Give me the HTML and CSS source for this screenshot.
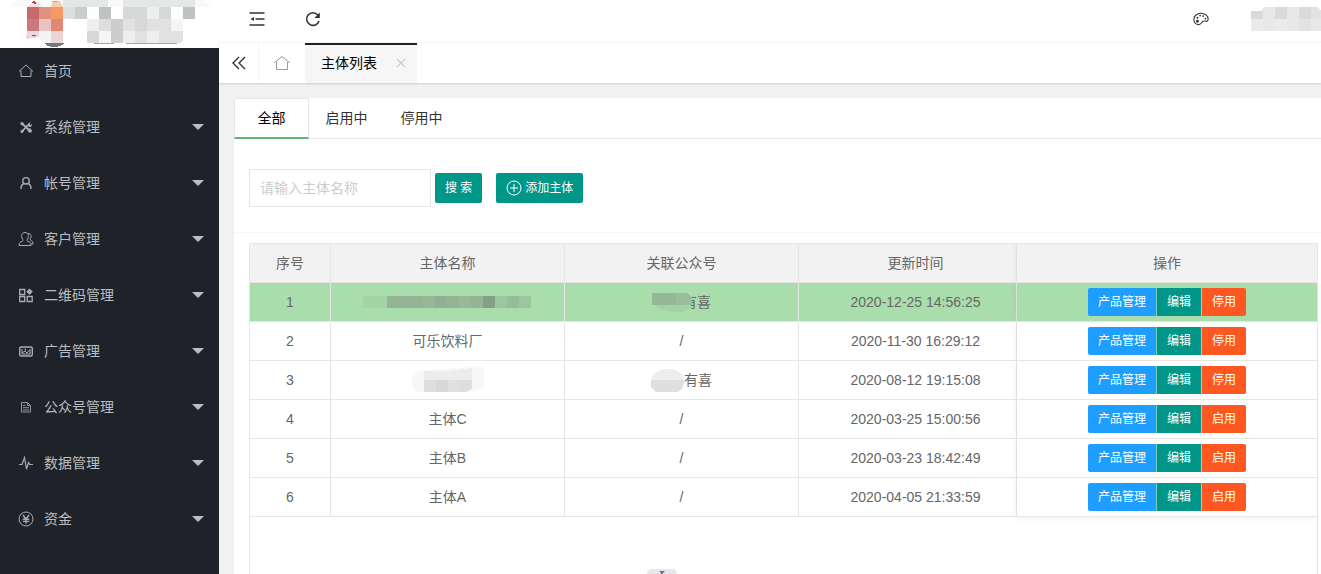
FILE: index.html
```
<!DOCTYPE html>
<html lang="zh-CN">
<head>
<meta charset="utf-8">
<title>主体列表</title>
<link rel="stylesheet" href="styles.css">
</head>
<body>
<div class="app">
  <aside class="side">
    <div class="logo">
      <svg width="219" height="48" viewBox="0 0 219 48" shape-rendering="crispEdges" aria-hidden="true">
        <path fill="#f8f9f9" d="M10 7 16 0H204l7 7z"/>
        <path fill="#e4e7e7" d="M63 0h45v7H63zM123 0h72v7h-72z"/>
        <path fill="#efe3e3" d="M27 7l5-5h6l4 5z"/><path fill="#c4423f" d="M31 2l3-1 3 2-2 1z"/><path fill="#f3cdb4" d="M51 7l2-6h7l3 6z"/><path fill="#eaa07a" d="M52 1h6v1h-6z"/>
        <path fill="#c9686d" d="M27 7h12v12H27z"/><path fill="#e1927f" d="M39 7h12v12H39z"/><path fill="#f49a62" d="M51 7h12v12H51z"/>
        <path fill="#c97a80" d="M27 19h12v12H27z"/><path fill="#e9c4c1" d="M39 19h12v12H39z"/><path fill="#e28777" d="M51 19h12v12H51z"/>
        <path fill="#f0d6d9" d="M27 31h12v6l-13 2z"/><path fill="#bd3a48" d="M32 35h4v1h-4z"/><path fill="#f5f4f5" d="M39 31h12v12h-7l-5-4z"/><path fill="#edd5d6" d="M51 31h12v12H51z"/>
        <path fill="#727a7c" d="M44 43h21q-4 4-11 4t-10-4z"/>
        <path fill="#dedede" d="M63 7h12v12H63zM99 19h12v12H99zM135 19h12v12h-12z"/>
        <path fill="#cdcdcd" d="M75 7h12v12H75zM111 19h12v12h-12zM111 31h12v12h-12z"/>
        <path fill="#c1c1c1" d="M99 7h12v12H99zM183 7h12v12h-12z"/>
        <path fill="#d8d8d8" d="M123 7h12v12h-12zM159 7h12v12h-12zM135 19h12v12h-12zM87 31h12v12H87zM135 7h12v12h-12z"/>
        <path fill="#eeeeee" d="M147 7h12v12h-12zM87 19h12v12H87zM123 31h12v12h-12zM147 31h12v12h-12z"/>
        <path fill="#e1e1e1" d="M123 19h12v12h-12zM147 19h24v12h-24zM135 31h12v12h-12zM159 31h24v10l-3 2h-21z"/>
        <path fill="#f5f5f5" d="M99 31h12v12H99zM171 19h12v12h-12z"/>
        <path fill="#a4a7a6" d="M94 43h20v1H94zM126 43h51v1h-51z"/>
      </svg>
    </div>
    <nav class="menu">
      <a class="item" href="#"><svg class="ico" viewBox="0 0 16 16"><path d="M1 8.500 8 2l7 6.500M3 7.500v6h10v-6"/></svg><span>首页</span></a>
      <a class="item" href="#"><svg class="ico" viewBox="0 0 16 16"><path stroke-width="1.800" d="M4 4.500l7.500 7M4 12.500l6-6.500"/><path fill="currentColor" stroke="none" d="M2.500 3.500 4.500 3l1.500 1.500-1.500 2-2-.8zM10 4.500 12.500 3l-1 2 1.200 1 1.300-1c.3 1.500-.5 3-2.500 3L9.500 7zM10 10l2-1 2 2.500-.5 2h-2.500L9.500 12zM2.500 11.500 5 10.500l1 1.500-1.500 2h-1.500z"/></svg><span>系统管理</span><i class="caret"></i></a>
      <a class="item" href="#"><svg class="ico" viewBox="0 0 16 16"><g stroke-width="1.400"><circle cx="8" cy="5.800" r="3.200"/><path d="M3 14c0-3 1.400-5 3.200-5.500M13 14c0-3-1.400-5-3.200-5.500"/></g></svg><span>帐号管理</span><i class="caret"></i></a>
      <a class="item" href="#"><svg class="ico" viewBox="0 0 16 16"><path d="M1 14.500c0-3 1.500-3.500 3.500-4.500.8-.5.500-1 0-2C2.500 4.500 4 1.500 7 1.500s4.500 3 2.500 6.500c-.5 1-.8 1.500 0 2 2 1 3.500 1.500 3.500 4.500zM10 2.500c3 .2 4 2.500 2.500 5-.5 1-.5 1.300 0 1.700 2 1 2.500 1.800 2.500 3.800h-2"/></svg><span>客户管理</span><i class="caret"></i></a>
      <a class="item" href="#"><svg class="ico" viewBox="0 0 16 16"><path stroke-width="1.300" d="M1.700 2.500h5v5h-5zM1.700 9.500h5v5h-5zM9.200 9.500h5v5h-5z"/><path fill="currentColor" d="M11.500 2l2.700 2.700-2.700 2.700-2.700-2.700z"/></svg><span>二维码管理</span><i class="caret"></i></a>
      <a class="item" href="#"><svg class="ico" viewBox="0 0 16 16"><rect x="1.700" y="4" width="12.600" height="9" rx="1.500" stroke-width="1.400"/><path d="M3.500 11h9M4 10.500V6M4 10l3-2 2 2 3-3.500V11M6.500 6h1v1.500"/></svg><span>广告管理</span><i class="caret"></i></a>
      <a class="item" href="#"><svg class="ico dim" viewBox="0 0 16 16"><path d="M3.500 3.500h6l3 3v6.500h-9zM9.500 3.500v3h3M5 6.500h2.500M5 8.700h6M5 11h6"/></svg><span>公众号管理</span><i class="caret"></i></a>
      <a class="item" href="#"><svg class="ico" viewBox="0 0 16 16"><path stroke-width="1.200" d="M1 9.500h3L6.500 2.500 8.500 14l2-6.500 1.200 2H15"/></svg><span>数据管理</span><i class="caret"></i></a>
      <a class="item" href="#"><svg class="ico" viewBox="0 0 16 16"><circle cx="8" cy="8" r="7"/><path stroke-width="1.400" d="M5 4l3 4 3-4M8 8v4.500M4.800 8.200h6.400M4.800 10.400h6.400"/></svg><span>资金</span><i class="caret"></i></a>
    </nav>
  </aside>

  <div class="main">
    <header class="topbar">
      <button class="tool" type="button" aria-label="收起菜单"><svg width="16" height="16" viewBox="0 0 16 16"><path stroke-width="1.500" d="M.5 2h15M6.500 8h9M.5 14h15"/><path fill="currentColor" stroke="none" d="M1.500 8l3.500-2v4z"/></svg></button>
      <button class="tool" type="button" aria-label="刷新"><svg width="16" height="16" viewBox="0 0 16 16"><path stroke-width="1.600" d="M12.800 4A6.300 6.300 0 1 0 14 10"/><path fill="currentColor" stroke="none" d="M14.800 1.500V7H9.300z"/></svg></button>
      <span class="spacer"></span>
      <button class="tool theme" type="button" aria-label="主题"><svg width="16" height="16" viewBox="0 0 18 16"><path stroke-width="1.200" d="M9 1.500c4.500 0 8 3 8 6.500 0 2-1 3-2.500 2.600-2-.6-3.300-.3-4.300 1C9.200 13 8 14.300 6 14.300 3 14.300 1 11.500 1 8.500c0-4 3.500-7 8-7z"/><g fill="currentColor" stroke="none"><circle cx="5" cy="10.500" r="1.600"/><circle cx="5" cy="6.500" r="1.100"/><circle cx="8" cy="4.200" r="1"/><circle cx="11.500" cy="4.700" r="1"/><circle cx="14" cy="7.500" r="1"/></g></svg></button>
      <svg class="user" width="71" height="24" viewBox="0 0 71 24" shape-rendering="crispEdges" aria-hidden="true"><path fill="#e8e8e8" d="M1 4h9l5-4h51l5 4v20H1z"/><path fill="#dadada" d="M1 4h12v8H1zM25 0h12v12H25zM49 0h12v12H49z"/><path fill="#ebebeb" d="M1 12h12v12H1zM25 12h12v12H25z"/><path fill="#e2e2e2" d="M61 0h6l4 4v8H61zM49 12h12v12H49z"/></svg>
    </header>
    <div class="pagetabs">
      <button class="prev" type="button" aria-label="向左"><svg width="14" height="16" viewBox="0 0 14 16"><path stroke-width="1.400" d="M7 2 1 8l6 6M13 2 7 8l6 6"/></svg></button>
      <a class="home" href="#" aria-label="首页"><svg width="18" height="16" viewBox="0 0 18 16"><path d="M1 8 9 1.500 17 8M3.500 7v7.500h11V7"/></svg></a>
      <div class="current"><span>主体列表</span><button class="close" type="button" aria-label="关闭"><svg width="10" height="10" viewBox="0 0 10 10"><path stroke-width="1.200" d="M1 1l8 8M9 1l-8 8"/></svg></button></div>
    </div>

    <main class="card">
      <div class="tabs" role="tablist">
        <button class="tab on" type="button" role="tab" aria-selected="true">全部</button>
        <button class="tab" type="button" role="tab">启用中</button>
        <button class="tab" type="button" role="tab">停用中</button>
      </div>
      <form class="search">
        <input class="field" type="text" placeholder="请输入主体名称" aria-label="主体名称">
        <button class="btn" type="button">搜 索</button>
        <button class="btn add" type="button"><svg width="16" height="16" viewBox="0 0 16 16"><circle cx="8" cy="8" r="7"/><path d="M8 4v8M4 8h8"/></svg>添加主体</button>
      </form>
      <div class="tablebox">
        <table class="grid">
          <colgroup><col class="c-no"><col class="c-mid"><col class="c-mid"><col class="c-time"><col></colgroup>
          <thead><tr><th>序号</th><th>主体名称</th><th>关联公众号</th><th class="time">更新时间</th><th class="ops">操作</th></tr></thead>
          <tbody>
            <tr class="sel"><td>1</td>
              <td><svg class="mask" width="170" height="16" viewBox="0 0 170 16" shape-rendering="crispEdges" aria-hidden="true"><path fill="#a3d3a6" d="M0 2h24v12H0z"/><path fill="#93b495" d="M24 2h108v12H24z"/><path fill="#97b998" d="M60 2h12v12H60zM96 2h12v12H96z"/><path fill="#8fb092" d="M72 2h12v12H72z"/><path fill="#859e86" d="M120 2h12v12h-12z"/><path fill="#9bc7a0" d="M132 2h36v12h-36z"/><path fill="#94bd98" d="M144 2h12v12h-12z"/></svg></td>
              <td><span class="masked"><svg class="mask" width="40" height="24" viewBox="0 0 40 24" shape-rendering="crispEdges" aria-hidden="true"><path fill="#a3d2a5" d="M1 14h39q-3 9-17 8-14-1-22-8z"/><path fill="#94b795" d="M0 3h36l4 5v7H0z"/><path fill="#9abd9b" d="M24 3h12l4 5v7H24z"/></svg><span class="tuck">有喜</span></span></td>
              <td class="time">2020-12-25 14:56:25</td><td class="ops"><div class="acts"><button type="button" class="b1">产品管理</button><button type="button" class="b2">编辑</button><button type="button" class="b3">停用</button></div></td></tr>
            <tr><td>2</td><td>可乐饮料厂</td><td>/</td><td class="time">2020-11-30 16:29:12</td><td class="ops"><div class="acts"><button type="button" class="b1">产品管理</button><button type="button" class="b2">编辑</button><button type="button" class="b3">停用</button></div></td></tr>
            <tr><td>3</td>
              <td><svg class="mask" width="72" height="28" viewBox="0 0 72 28" shape-rendering="crispEdges" aria-hidden="true"><path fill="#f7f7f8" d="M0 11 4 6l8-2 48-3h12v20l-12 5H4l-4-4z"/><path fill="#ececec" d="M12 5h24l24-3v12H12z"/><path fill="#dedede" d="M12 14h48v9l-6 3H12z"/><path fill="#d8d8d8" d="M24 14h12v12H24z"/><path fill="#e3dfe1" d="M36 14h12v12H36z"/></svg></td>
              <td><span class="masked"><svg class="mask" width="33" height="24" viewBox="0 0 33 24" aria-hidden="true"><path fill="#ededed" d="M0 12Q3 1 17 1t16 11q0 9-6 12H5L0 19z"/><path fill="#dfdfdf" d="M0 12h33q0 9-6 12H5L0 19z"/></svg>有喜</span></td>
              <td class="time">2020-08-12 19:15:08</td><td class="ops"><div class="acts"><button type="button" class="b1">产品管理</button><button type="button" class="b2">编辑</button><button type="button" class="b3">停用</button></div></td></tr>
            <tr><td>4</td><td>主体C</td><td>/</td><td class="time">2020-03-25 15:00:56</td><td class="ops"><div class="acts"><button type="button" class="b1">产品管理</button><button type="button" class="b2">编辑</button><button type="button" class="b3">启用</button></div></td></tr>
            <tr><td>5</td><td>主体B</td><td>/</td><td class="time">2020-03-23 18:42:49</td><td class="ops"><div class="acts"><button type="button" class="b1">产品管理</button><button type="button" class="b2">编辑</button><button type="button" class="b3">启用</button></div></td></tr>
            <tr><td>6</td><td>主体A</td><td>/</td><td class="time">2020-04-05 21:33:59</td><td class="ops"><div class="acts"><button type="button" class="b1">产品管理</button><button type="button" class="b2">编辑</button><button type="button" class="b3">启用</button></div></td></tr>
          </tbody>
        </table>
      </div>
    </main>
  </div>
  <span class="handle"><svg width="6" height="3" viewBox="0 0 6 3"><path fill="#6b7280" d="M0 0h6L4 2v1H2V2z"/></svg></span>
</div>
</body>
</html>
```
FILE: styles.css
```
* { box-sizing: border-box; }
body {
  margin: 0;
  font: 14px/24px "Liberation Sans", "Noto Sans CJK SC", sans-serif;
  color: #666;
  background: #f1f1f1;
}
button { margin: 0; padding: 0; border: 0; background: none; font: inherit; color: inherit; }
a { color: inherit; text-decoration: none; }
svg { display: block; fill: none; stroke: currentColor; stroke-width: 1; }
.logo svg, .mask, .user, .handle svg { stroke: none; }

.app { position: relative; display: flex; height: 100vh; overflow: hidden; }

.side { flex: none; width: 219px; background: #20222a; overflow: hidden; }
.logo { height: 48px; background: #fff; }
.menu { display: flex; flex-direction: column; gap: 10px; color: #bcbdbf; }
.item { display: flex; align-items: center; height: 46px; padding: 0 15px 0 18px; }
.item span { flex: 1; margin-left: 10px; }
.ico { width: 16px; height: 16px; opacity: .9; }
.dim { opacity: .75; }
.caret { border: 6px solid transparent; border-top-color: #bcbdbf; border-bottom: 0; }

.main { flex: 1; min-width: 0; display: flex; flex-direction: column; }
.topbar {
  flex: none; display: flex; align-items: center; height: 43px; padding-left: 10px;
  padding-bottom: 4px; background: #fff; border-bottom: 1px solid #f6f6f6; color: #333;
}
.tool { display: grid; place-items: center; width: 56px; height: 38px; }
.spacer { flex: 1; }
.theme { margin-right: 21px; }

.pagetabs {
  flex: none; display: flex; height: 40px; background: #fff; color: #333;
  box-shadow: 0 1px 2px rgba(0, 0, 0, .15);
}
.prev { width: 40px; display: grid; place-items: center; border-right: 1px solid #f6f6f6; }
.home { width: 46px; display: grid; place-items: center; color: #999; }
.current {
  display: flex; align-items: center; gap: 19px; padding: 0 11px 2px 16px;
  background: #f6f6f6; border-top: 2px solid #20222a; color: #000;
}
.close { color: #ccc; }

.card { flex: 1; margin: 15px 0 0 15px; background: #fff; }
.tabs { display: flex; height: 41px; border-bottom: 1px solid #e6e6e6; color: #333; }
.tab { width: 75px; height: 41px; padding-bottom: 1px; }
.tab.on { border: 1px solid #e6e6e6; border-bottom: 2px solid #5fb878; border-radius: 2px 2px 0 0; color: #000; padding: 0; }
.search { display: flex; align-items: center; padding: 30px 15px 25px; border-bottom: 1px solid #f6f6f6; }
.field {
  width: 182px; height: 38px; padding: 0 10px; border: 1px solid #e6e6e6; border-radius: 2px;
  font: inherit; color: #666;
}
.field::placeholder { color: #ccc; }
.btn {
  display: flex; align-items: center; height: 30px; margin-left: 4px; padding: 0 10px;
  border-radius: 2px; background: #009688; color: #fff; font-size: 12px;
}
.add { gap: 3px; margin-left: 14px; }

.tablebox { height: 600px; margin: 10px 3px 0 15px; border: 1px solid #e6e6e6; }
.grid { width: 100%; table-layout: fixed; border-collapse: separate; border-spacing: 0; }
.c-no { width: 81px; }
.c-mid { width: 234px; }
.c-time { width: 218px; }
.grid th, .grid td {
  height: 39px; padding: 0; text-align: center; font-weight: 400;
  border-right: 1px solid #e6e6e6; border-bottom: 1px solid #e6e6e6;
}
.grid th { background: #f2f2f2; }
.grid .sel td { background: #a9deac; }
.grid .time { padding-left: 16px; }
.grid .ops {
  border-right: 0; background: #fff; box-shadow: 0 0 8px rgba(0, 0, 0, .08);
  clip-path: inset(0 0 0 -10px);
}
.grid th.ops { background: #f2f2f2; }
.grid .sel .ops { background: #a9deac; }
.grid tr:last-child td.ops { clip-path: inset(0 0 -10px -10px); }
.grid thead th.ops { clip-path: inset(0 0 0 -10px); }
.mask { margin: 0 auto; }
.masked { display: flex; align-items: center; justify-content: center; }
.masked .mask { position: relative; z-index: 1; margin: 0; }
.tuck { margin-left: -9px; }

.acts { display: flex; justify-content: center; color: #fff; font-size: 12px; line-height: 28px; }
.acts button { height: 28px; padding: 0 10px; }
.acts .b1 { background: #1e9fff; border-radius: 2px 0 0 2px; }
.acts .b2 { background: #009688; border-left: 1px solid #80cac3; }
.acts .b3 { background: #ff5722; border-left: 1px solid #ffab90; border-radius: 0 2px 2px 0; }

.handle {
  position: absolute; left: 49%; bottom: 0; display: grid; place-items: end center;
  width: 30px; height: 5px; border-radius: 8px 8px 0 0; background: #e5e7eb;
}
```
